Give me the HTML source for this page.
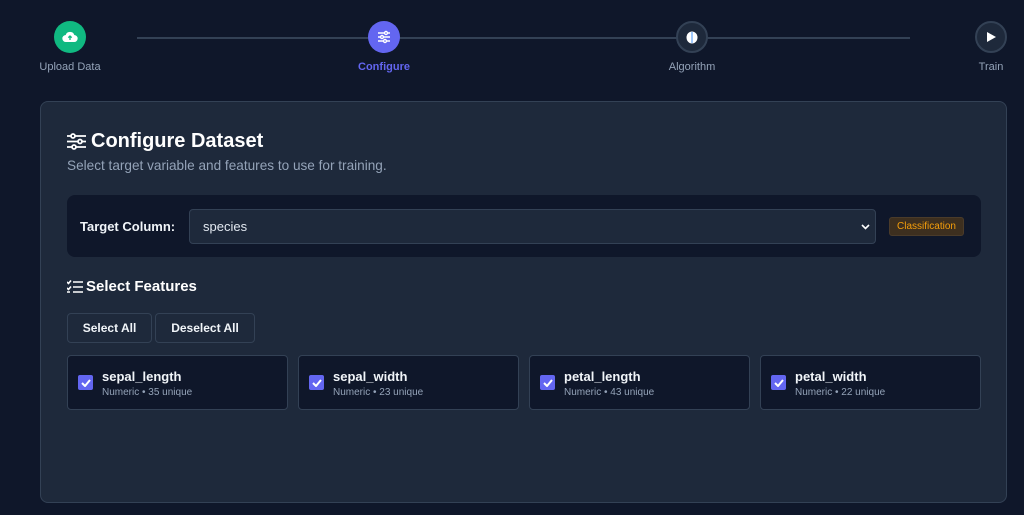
<!DOCTYPE html>
<html><head><meta charset="utf-8"><style>
*{box-sizing:border-box;margin:0;padding:0}
body{width:1024px;height:515px;background:#0f172a;font-family:"Liberation Sans",sans-serif;position:relative;overflow:hidden;color:#f1f5f9}
.abs{position:absolute}
.line{position:absolute;top:37px;height:2px;background:#334155}
.circ{position:absolute;top:21px;width:32px;height:32px;border-radius:50%;display:flex;align-items:center;justify-content:center}
.lbl{position:absolute;top:61px;font-size:11px;color:#94a3b8;transform:translateX(-50%);white-space:nowrap}
.card{position:absolute;left:40px;top:101px;width:967px;height:402px;background:#1e293b;border:1px solid #334155;border-radius:8px}
.feat{position:absolute;top:355px;width:221px;height:55px;background:#0f172a;border:1px solid #334155;border-radius:4px}
.cb{position:absolute;left:10px;top:19px;width:15px;height:15px;background:#6366f1;border-radius:2px;display:flex;align-items:center;justify-content:center}
.fn{position:absolute;left:34px;top:13px;font-size:13px;font-weight:bold;color:#f1f5f9}
.fs{position:absolute;left:34px;top:31px;font-size:10px;color:#94a3b8}
.btn{position:absolute;top:313px;height:30px;border:1px solid #334155;border-radius:4px;background:#1e293b;font-size:12px;font-weight:bold;display:flex;align-items:center;justify-content:center}
</style></head><body>
<div class="line" style="left:137px;width:773px"></div>
<div class="circ" style="left:54px;background:#10b981"><svg width="16" height="12" viewBox="0 0 16 12"><path d="M4 11a3.5 3.5 0 0 1-.3-7A4.5 4.5 0 0 1 12.3 4 3.5 3.5 0 0 1 12 11z" fill="#fff"/><path d="M8 9V5M6.3 6.6 8 5l1.7 1.6" stroke="#10b981" stroke-width="1.3" fill="none"/></svg></div>
<div class="lbl" style="left:70px">Upload Data</div>
<div class="circ" style="left:368px;background:#6366f1"><svg width="14" height="14" viewBox="0 0 14 14" stroke="#fff" stroke-width="1.4" fill="none"><path d="M1 3h12M1 7h12M1 11h12"/><circle cx="9" cy="3" r="1.5" fill="#6366f1"/><circle cx="5" cy="7" r="1.5" fill="#6366f1"/><circle cx="8" cy="11" r="1.5" fill="#6366f1"/></svg></div>
<div class="lbl" style="left:384px;color:#6366f1;font-weight:bold">Configure</div>
<div class="circ" style="left:676px;background:#1e293b;border:2px solid #334155"><svg width="12" height="13" viewBox="0 0 12 13"><ellipse cx="6" cy="6.5" rx="5.5" ry="6" fill="#fff"/><path d="M6 1v11" stroke="#60a5fa" stroke-width="1.2"/></svg></div>
<div class="lbl" style="left:692px">Algorithm</div>
<div class="circ" style="left:975px;background:#1e293b;border:2px solid #334155"><svg width="12" height="12" viewBox="0 0 12 12"><path d="M2 1l9 5-9 5z" fill="#fff"/></svg></div>
<div class="lbl" style="left:991px">Train</div>

<div class="card"></div>
<svg class="abs" style="left:67px;top:133px" width="19" height="17" viewBox="0 0 19 17" stroke="#fff" stroke-width="1.8" fill="none"><path d="M0 3h19M0 8.5h19M0 14h19"/><circle cx="6" cy="3" r="2" fill="#1e293b"/><circle cx="13" cy="8.5" r="2" fill="#1e293b"/><circle cx="7" cy="14" r="2" fill="#1e293b"/></svg>
<div class="abs" style="left:91px;top:130px;font-size:20px;font-weight:bold;color:#fff">Configure Dataset</div>
<div class="abs" style="left:67px;top:158px;font-size:13.6px;color:#94a3b8">Select target variable and features to use for training.</div>

<div class="abs" style="left:67px;top:195px;width:914px;height:62px;background:#0f172a;border-radius:8px"></div>
<div class="abs" style="left:80px;top:219px;font-size:13px;font-weight:bold">Target Column:</div>
<div class="abs" style="left:189px;top:209px;width:687px;height:35px;background:#1e293b;border:1px solid #334155;border-radius:4px"><span class="abs" style="left:13px;top:9px;font-size:13px;color:#e2e8f0">species</span><svg class="abs" style="left:671px;top:14px" width="9" height="6" viewBox="0 0 9 6"><path d="M1 1l3.5 3.5L8 1" stroke="#fff" stroke-width="1.6" fill="none"/></svg></div>
<div class="abs" style="left:889px;top:217px;width:75px;height:19px;background:#3d2f1f;border:1px solid #4a3b2a;border-radius:3px;font-size:10px;color:#f59e0b;display:flex;align-items:center;justify-content:center">Classification</div>

<svg class="abs" style="left:67px;top:280px" width="16" height="13" viewBox="0 0 16 13" stroke="#fff" stroke-width="1.6" fill="none"><path d="M0 2l1.5 1.5L4 0.5M0 8l1.5 1.5L4 6.5M0 12h3M6 2h10M6 7h10M6 12h10"/></svg>
<div class="abs" style="left:86px;top:278px;font-size:15px;font-weight:bold;color:#fff">Select Features</div>
<div class="btn" style="left:67px;width:85px">Select All</div>
<div class="btn" style="left:155px;width:100px">Deselect All</div>

<div class="feat" style="left:67px"><div class="cb"><svg width="10" height="8" viewBox="0 0 10 8"><path d="M1 4l3 3 5-6" stroke="#fff" stroke-width="2" fill="none"/></svg></div><div class="fn">sepal_length</div><div class="fs">Numeric • 35 unique</div></div>
<div class="feat" style="left:298px"><div class="cb"><svg width="10" height="8" viewBox="0 0 10 8"><path d="M1 4l3 3 5-6" stroke="#fff" stroke-width="2" fill="none"/></svg></div><div class="fn">sepal_width</div><div class="fs">Numeric • 23 unique</div></div>
<div class="feat" style="left:529px"><div class="cb"><svg width="10" height="8" viewBox="0 0 10 8"><path d="M1 4l3 3 5-6" stroke="#fff" stroke-width="2" fill="none"/></svg></div><div class="fn">petal_length</div><div class="fs">Numeric • 43 unique</div></div>
<div class="feat" style="left:760px"><div class="cb"><svg width="10" height="8" viewBox="0 0 10 8"><path d="M1 4l3 3 5-6" stroke="#fff" stroke-width="2" fill="none"/></svg></div><div class="fn">petal_width</div><div class="fs">Numeric • 22 unique</div></div>
</body></html>
